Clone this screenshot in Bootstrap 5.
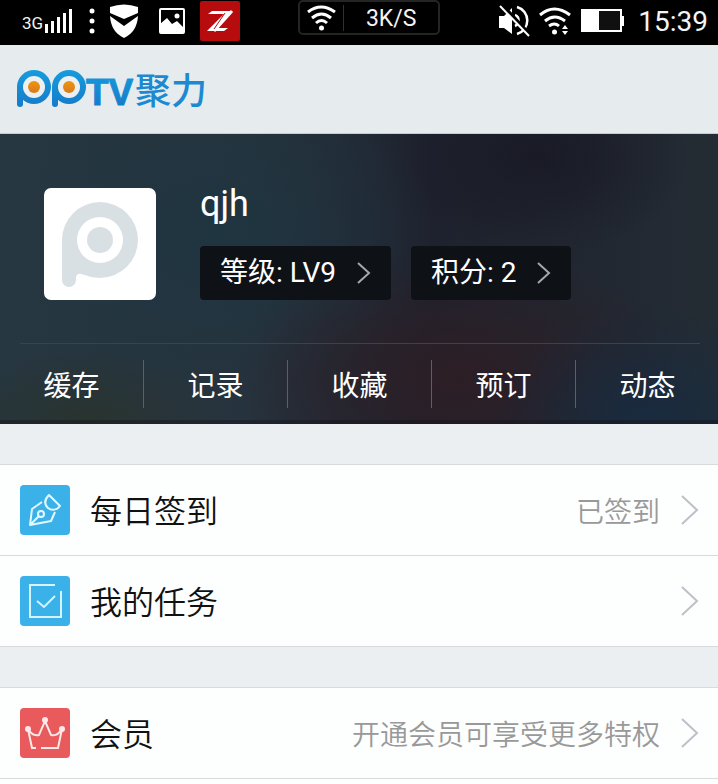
<!DOCTYPE html>
<html lang="zh-CN">
<head>
<meta charset="utf-8">
<meta name="viewport" content="width=device-width, initial-scale=1">
<title>PPTV聚力</title>
<link href="https://cdn.jsdelivr.net/npm/bootstrap@5.3.0/dist/css/bootstrap.min.css" rel="stylesheet">
<style>
  body { font-family: Roboto, "Noto Sans CJK SC", sans-serif; background: #fdfefe; color: #111; }
  svg { display: block; flex: none; }
  a, a:hover { color: inherit; text-decoration: none; }

  .status-bar { background: #000; color: #f4f4f4; height: 45px; padding: 0 10px 4px 22px; }
  .status-3g { font-size: 17px; line-height: 16px; padding-top: 4px; }
  .signal { margin: 0 16px 0 2px; }
  .shield { margin-left: 14px; }
  .gallery { margin: 0 14px 0 19px; }
  .status-clock { font-size: 28px; line-height: 40px; padding-top: 2px; margin-left: 14px; }
  .net-pill { border: 2px solid #242424; border-radius: 5px; height: 35px; width: 142px; }
  .net-pill .net-icon { border-right: 1px solid #303030; padding: 0 7px; }
  .net-pill .net-rate { font-size: 23px; line-height: 32px; padding-top: 2px; }
  .battery { margin-left: 10px; }

  .brand-bar { background: #e6ebee; height: 89px; padding: 0 16px; border-bottom: 1px solid #c5cbd0; }
  .brand-name { color: #1b8ad2; font-size: 36px; line-height: 44px; font-weight: 500; padding-top: 6px; }

  .profile {
    color: #fff;
    background:
      radial-gradient(ellipse 150px 100px at 75% 8%, #191a25 0%, transparent 100%),
      radial-gradient(ellipse 150px 110px at 90% 98%, #182b3f 0%, transparent 100%),
      radial-gradient(ellipse 230px 130px at 64% 84%, #2d1e25 0%, transparent 100%),
      radial-gradient(ellipse 140px 80px at 12% 100%, #29332f 0%, transparent 100%),
      radial-gradient(ellipse 220px 170px at 30% 34%, #1f3540 0%, transparent 100%),
      linear-gradient(90deg, #263741 0%, #26333e 35%, #1e222e 60%, #242c34 100%);
    background-origin: border-box;
    border-bottom: 4px solid rgba(20, 18, 28, .4);
  }
  .profile-head { padding: 54px 24px 43px 44px; gap: 44px; }
  .avatar { width: 112px; height: 112px; }
  .user-name { font-size: 36px; line-height: 32px; font-weight: 400; }
  .btn-stat, .btn-stat:hover { background: #0e1217; color: #fff; border: 0; border-radius: 4px; font-size: 28px; line-height: 42px; padding: 6px 20px; gap: 21px; }
  .stat-list { gap: 20px; }
  .profile-tabs { margin: 0 18px 0 20px; border-top: 1px solid #3b434a; }
  .tab-list { margin: 0 -20px; padding: 16px 0 12px; }
  .tab-list a { font-size: 28px; line-height: 42px; padding-top: 6px; border-right: 1px solid #5b6066; }
  .tab-list a:last-child { border-right-color: transparent; }

  .menu-gap { background: #ebeff1; height: 40px; }
  .menu-list { border-top: 1px solid #d8dadc; }
  .menu-list a { height: 91px; padding: 0 19px 0 20px; gap: 20px; background: #fdfefe; border-bottom: 1px solid #d8dadc; }
  .menu-label { font-size: 32px; line-height: 48px; font-weight: 350; padding-top: 4px; }
  .menu-hint { font-size: 28px; line-height: 42px; color: #999; font-weight: 350; padding-top: 6px; }
</style>
</head>
<body>
<div class="status-bar d-flex justify-content-between align-items-center">
  <div class="d-flex align-items-center">
    <span class="status-3g">3G</span>
    <svg width="28" height="26" viewBox="0 0 28 26" fill="#fff" class="signal"><path d="M0 16h3v9H0zM6 13h3v12H6zM12 9h3v16h-3zM18 5h3v20h-3zM24 1h3v24h-3z"/></svg>
    <svg width="6" height="26" viewBox="0 0 6 26" fill="#fff"><circle cx="3" cy="3" r="2.5"/><circle cx="3" cy="13" r="2.5"/><circle cx="3" cy="23" r="2.5"/></svg>
    <svg width="30" height="36" viewBox="0 0 30 36" fill="#fff" class="shield"><path d="M1 4Q15-1 29 4V10L15 16 1 10z"/><path d="M1 13l14 10 14-10Q28 29 15 35 2 29 1 13z"/></svg>
    <svg width="28" height="28" viewBox="0 0 28 28" class="gallery"><rect x="2" y="2" width="24" height="24" rx="1" fill="none" stroke="#fff" stroke-width="2"/><circle cx="19" cy="9" r="2.5" fill="#fff"/><path d="M2 17l7-6 5 6 5-3 7 7v5H2z" fill="#fff"/></svg>
    <svg width="40" height="40" viewBox="0 0 40 40"><rect width="40" height="40" rx="2" fill="#b60c0e"/><path d="M12 10h20L15 27h13l-4 3H7L24 13H8z" fill="#fff"/><path d="M14 30L32 10" stroke="#fff" stroke-width="3"/><path d="M25 12L14 28" stroke="#b60c0e" stroke-width="1"/></svg>
  </div>
  <div class="net-pill d-flex align-items-center align-self-start">
    <div class="net-icon">
      <svg width="29" height="26" viewBox="0 0 29 26" fill="none" stroke="#fff" stroke-width="3"><path d="M1 7Q14-3 28 7M5 13q9.500-8 19 0M9 18q5.500-5 11 0"/><circle cx="14.500" cy="23" r="2.500" fill="#fff" stroke="none"/></svg>
    </div>
    <span class="net-rate flex-fill text-center">3K/S</span>
  </div>
  <div class="d-flex align-items-center">
    <svg width="33" height="32" viewBox="0 0 33 32"><path d="M1 11h5l8-8v26l-8-6H1z" fill="#fff"/><path d="M19 2a14 14 0 0 1 0 27M17 10a6 6 0 0 1 0 11" fill="none" stroke="#fff" stroke-width="2.500"/><path d="M4 0l28 30" stroke="#000" stroke-width="4"/><path d="M2 1l29 30" stroke="#fff" stroke-width="2"/></svg>
    <svg width="32" height="28" viewBox="0 0 32 28" fill="none" stroke="#fff" stroke-width="3" class="ms-2"><path d="M1 8Q15-4 31 8M6 14q9.500-8 20 0M10 19q5.500-4 10 0"/><circle cx="15.500" cy="25" r="2.500" fill="#fff" stroke="none"/><path d="M23 22l3-4 3 4zM23 24l3 4 3-4z" fill="#fff" stroke="none"/></svg>
    <svg class="battery" width="43" height="24" viewBox="0 0 43 24"><rect x="1" y="1" width="39" height="21" fill="#101010" stroke="#fff" stroke-width="2"/><path d="M2 2h16v19H2zM41 7h2v10h-2z" fill="#fff"/></svg>
    <span class="status-clock">15:39</span>
  </div>
</div>

<header class="brand-bar d-flex align-items-center">
  <svg width="119" height="56" viewBox="0 -8 119 56" role="img" aria-label="PPTV">
    <defs>
      <linearGradient id="blue" x1="0" y1="0" x2="0" y2="40" gradientUnits="userSpaceOnUse"><stop offset="0" stop-color="#169ddd"/><stop offset="1" stop-color="#1679c8"/></linearGradient>
      <linearGradient id="orange" x1="0" y1="0" x2="0" y2="1"><stop offset="0" stop-color="#f0940f"/><stop offset="1" stop-color="#d97b1c"/></linearGradient>
    </defs>
    <g fill="url(#blue)">
      <circle cx="18" cy="18" r="17"/><rect x="1" y="17" width="6" height="21" rx="3"/>
      <circle cx="53" cy="18" r="17"/><rect x="36" y="17" width="6" height="21" rx="3"/>
      <text x="70" y="36" font-family="Liberation Sans, sans-serif" font-weight="700" font-size="37" stroke="url(#blue)" stroke-width="1" stroke-linejoin="round">TV</text>
    </g>
    <g fill="#edf0f1"><circle cx="18" cy="18" r="11"/><circle cx="53" cy="18" r="11"/></g>
    <g fill="url(#orange)"><circle cx="18" cy="18" r="6"/><circle cx="53" cy="18" r="6"/></g>
  </svg>
  <span class="brand-name">聚力</span>
</header>

<main>
  <section class="profile">
    <div class="profile-head d-flex">
      <svg class="avatar" viewBox="0 0 112 112" role="img" aria-label="头像"><rect width="112" height="112" rx="7" fill="#fff"/><path d="M18 52a38 38 0 1 1 38 38c-8 0-14-3-19-4-3-1-5 1-5 4v2a7 7 0 0 1-14 0z" fill="#d9e0e3"/><circle cx="56" cy="52" r="23" fill="#fff"/><circle cx="56" cy="52" r="13" fill="#d9e0e3"/></svg>
      <div class="d-flex flex-column justify-content-between">
        <h1 class="user-name m-0">qjh</h1>
        <div class="stat-list d-flex">
          <button type="button" class="btn btn-stat d-flex align-items-center">等级: LV9
            <svg width="14" height="24" viewBox="0 0 14 24" fill="none" stroke="#a3a8ad" stroke-width="2"><path d="M1 2l11 10L1 22"/></svg></button>
          <button type="button" class="btn btn-stat d-flex align-items-center">积分: 2
            <svg width="14" height="24" viewBox="0 0 14 24" fill="none" stroke="#a3a8ad" stroke-width="2"><path d="M1 2l11 10L1 22"/></svg></button>
        </div>
      </div>
    </div>
    <div class="profile-tabs">
      <nav class="tab-list row g-0 text-center">
        <a class="col" href="#">缓存</a><a class="col" href="#">记录</a><a class="col" href="#">收藏</a><a class="col" href="#">预订</a><a class="col" href="#">动态</a>
      </nav>
    </div>
  </section>

  <div class="menu-gap"></div>
  <nav class="menu-list">
    <a href="#" class="d-flex align-items-center">
      <svg width="50" height="50" viewBox="0 0 50 50"><rect width="50" height="50" rx="4" fill="#3bb1ea"/><g fill="none" stroke="#e4f8fd" stroke-width="2" stroke-linejoin="round"><path d="M22 17l-10 7-2 16 21-4 4-9M10 40l9-9"/><circle cx="21" cy="29" r="3"/><path d="M29 10l11 11c-3 4-8 5-12 2-4-4-4-8 1-13z"/></g></svg>
      <span class="menu-label flex-fill">每日签到</span>
      <span class="menu-hint">已签到</span>
      <svg width="19" height="32" viewBox="0 0 19 32" fill="none" stroke="#bbc1c7" stroke-width="2"><path d="M2 2l15 14L2 30"/></svg>
    </a>
    <a href="#" class="d-flex align-items-center">
      <svg width="50" height="50" viewBox="0 0 50 50"><rect width="50" height="50" rx="4" fill="#3bb1ea"/><path d="M35 9H10v32h31V15M17 25l7 6 11-11" fill="none" stroke="#d5f5fc" stroke-width="2"/></svg>
      <span class="menu-label flex-fill">我的任务</span>
      <svg width="19" height="32" viewBox="0 0 19 32" fill="none" stroke="#bbc1c7" stroke-width="2"><path d="M2 2l15 14L2 30"/></svg>
    </a>
  </nav>
  <div class="menu-gap"></div>
  <nav class="menu-list">
    <a href="#" class="d-flex align-items-center">
      <svg width="50" height="50" viewBox="0 0 50 50"><rect width="50" height="50" rx="4" fill="#e95a5c"/><path d="M16 40h-4L8 21c3 5 7 7 11 6l6-14 6 14c4 1 8-1 11-6l-4 19H21" fill="none" stroke="#fde9e9" stroke-width="2"/><g fill="#fde9e9"><circle cx="8" cy="21" r="3"/><circle cx="25" cy="12" r="3"/><circle cx="42" cy="21" r="3"/></g></svg>
      <span class="menu-label flex-fill">会员</span>
      <span class="menu-hint">开通会员可享受更多特权</span>
      <svg width="19" height="32" viewBox="0 0 19 32" fill="none" stroke="#bbc1c7" stroke-width="2"><path d="M2 2l15 14L2 30"/></svg>
    </a>
  </nav>
</main>
<script src="https://cdn.jsdelivr.net/npm/bootstrap@5.3.0/dist/js/bootstrap.bundle.min.js"></script>
</body>
</html>
